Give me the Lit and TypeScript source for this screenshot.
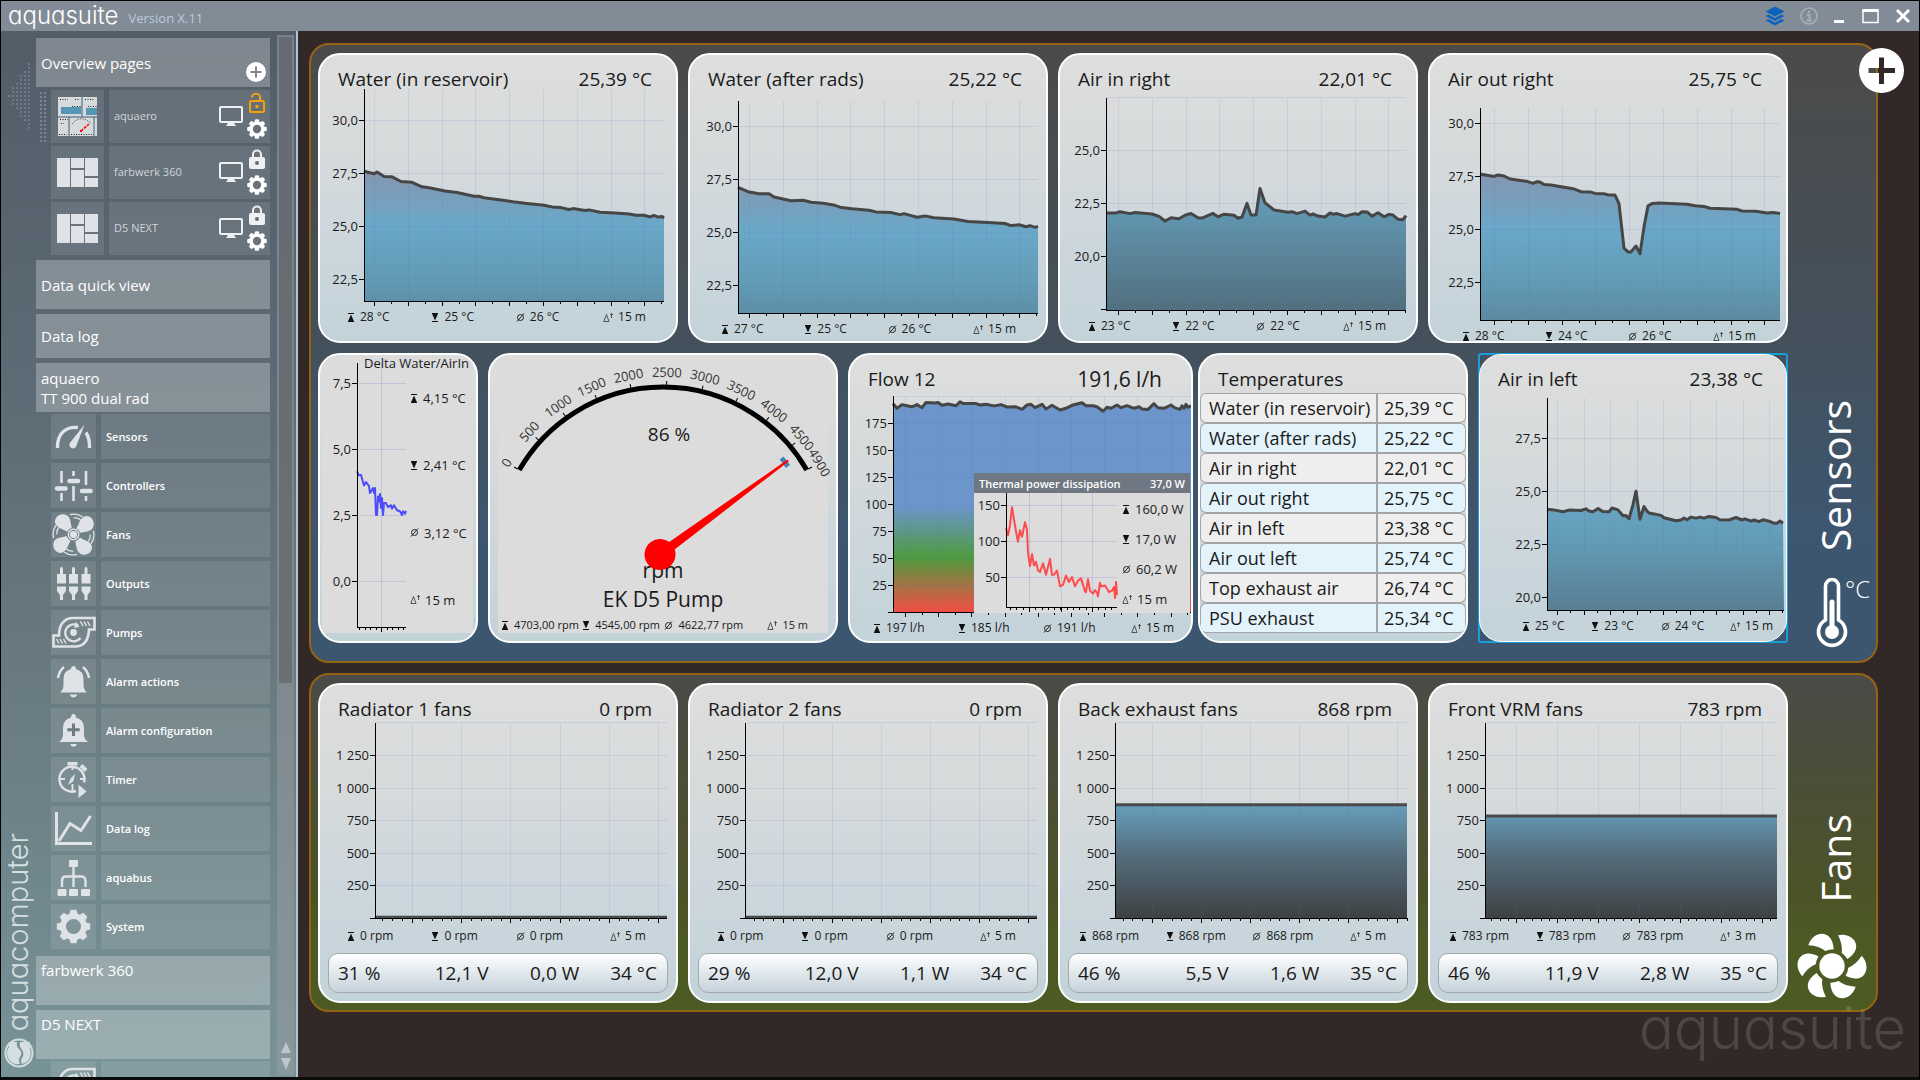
import { LitElement, html, svg, css, nothing, TemplateResult } from "lit";
import { customElement, property } from "lit/decorators.js";
import { classMap } from "lit/directives/class-map.js";
import { styleMap } from "lit/directives/style-map.js";

type Point = [number, number];

interface TrendConfig {
  width: number;
  left: number;
  plotW: number;
  plotH: number;
  tail?: number;
  refValue: number;
  refY: number;
  pxPerUnit: number;
  ticks: [string, number][];
  grid: { first: number; step: number; count: number; minor: number };
  stops?: [number, string][];
  line: string;
  lineWidth: number;
  points: Point[];
  clean?: boolean;
}

interface Stats {
  max: string;
  min: string;
  avg: string;
  span: string;
}

const WATER_STOPS: [number, string][] = [
  [30, "#9a8aa4"],
  [27.5, "#8497b2"],
  [25, "#6aa8c8"],
  [22.5, "#629ab5"],
  [20, "#5a8499"],
  [17.5, "#51707f"],
];
const FAN_STOPS: [number, string][] = [
  [870, "#669eb9"],
  [750, "#6191aa"],
  [500, "#566f7e"],
  [250, "#495860"],
  [0, "#3e4142"],
];
const FLOW_STOPS: [number, string][] = [
  [200, "#6b95cb"],
  [98, "#6b95cb"],
  [50, "#4f9a3e"],
  [5, "#e45546"],
  [0, "#f04e44"],
];

const tempChart = (
  left: number,
  refValue: number,
  refY: number,
  ticks: [string, number][],
  first: number,
  points: Point[],
): TrendConfig => ({
  width: 356,
  left,
  plotW: 300,
  plotH: 212,
  refValue,
  refY,
  pxPerUnit: 21.2,
  ticks,
  grid: { first, step: 33.8, count: 9, minor: 2 },
  stops: WATER_STOPS,
  line: "#464646",
  lineWidth: 3,
  points,
});

const fanChart = (rpm: number, step: number, first: number): TrendConfig => ({
  width: 356,
  left: 55,
  plotW: 292,
  plotH: 195,
  tail: 9,
  refValue: 0,
  refY: 195,
  pxPerUnit: 0.1304,
  ticks: [
    ["1 250", 1250],
    ["1 000", 1000],
    ["750", 750],
    ["500", 500],
    ["250", 250],
    ["", 0],
    ["-", 1500],
  ],
  grid: { first, step, count: Math.floor((292 - first) / step) + 1, minor: 5 },
  stops: FAN_STOPS,
  line: "#4a4a4a",
  lineWidth: 3,
  points: [
    [0, rpm],
    [292, rpm],
  ],
});

const T_HIGH: [string, number][] = [["30,0", 30], ["27,5", 27.5], ["25,0", 25], ["22,5", 22.5]];

const waterReservoir = tempChart(44, 30, 31, T_HIGH, 10, [
  [0, 27.58], [10, 27.46], [13, 27.55], [20, 27.33], [28, 27.32], [37, 27.1], [48, 27.06], [58, 26.85], [65, 26.8],
  [81, 26.65], [93, 26.58], [110, 26.4], [115, 26.4], [120, 26.33], [137, 26.23], [149, 26.14], [163, 26.06],
  [180, 25.98], [188, 25.9], [197, 25.87], [205, 25.78], [209, 25.82], [221, 25.73], [225, 25.76], [236, 25.65],
  [251, 25.62], [265, 25.56], [272, 25.51], [280, 25.51], [286, 25.43], [290, 25.5], [294, 25.42], [298, 25.45],
  [300, 25.37],
]);
const waterRads = tempChart(48, 30, 25, T_HIGH, 11, [
  [0, 27.11], [10, 26.9], [21, 26.8], [31, 26.8], [36, 26.65], [53, 26.47], [65, 26.5], [73, 26.4], [85, 26.36],
  [97, 26.26], [102, 26.17], [114, 26.1], [131, 26.03], [138, 25.95], [153, 25.92], [162, 25.82], [166, 25.87],
  [179, 25.7], [187, 25.76], [196, 25.67], [216, 25.62], [230, 25.5], [250, 25.45], [267, 25.4], [273, 25.3],
  [281, 25.34], [288, 25.25], [292, 25.3], [297, 25.22], [300, 25.27],
]);
const airInRight = tempChart(46, 25, 52, [["25,0", 25], ["22,5", 22.5], ["20,0", 20], ["", 17.5], ["-", 27.5]], 12, [
  [0, 22.03], [10, 22.03], [14, 22.09], [24, 22], [29, 22.05], [46, 21.98], [53, 21.87], [59, 21.65], [65, 21.8],
  [73, 21.76], [79, 21.92], [85, 22.01], [92, 21.8], [96, 21.79], [107, 22.01], [112, 21.85], [118, 21.97],
  [128, 21.92], [132, 21.78], [136, 21.84], [141, 22.48], [145, 21.93], [150, 21.93], [154, 23.19], [159, 22.5],
  [161, 22.44], [168, 22.17], [182, 22.06], [186, 22.09], [191, 22], [199, 22.12], [204, 21.93], [207, 21.98],
  [212, 21.88], [219, 21.84], [224, 22.03], [227, 21.97], [231, 22], [239, 21.88], [249, 22], [252, 21.95],
  [256, 22.09], [261, 22.08], [266, 21.88], [272, 22.04], [278, 21.85], [283, 21.96], [287, 21.93], [292, 21.73],
  [297, 21.71], [300, 21.9],
]);
const airOutRight = tempChart(50, 30, 15, T_HIGH, 14, [
  [0, 27.6], [14, 27.48], [18, 27.55], [24, 27.5], [30, 27.36], [47, 27.25], [53, 27.15], [57, 27.23], [60, 27.22],
  [64, 27.1], [71, 27.08], [93, 26.9], [101, 26.76], [110, 26.75], [115, 26.68], [124, 26.66], [129, 26.6],
  [135, 26.6], [139, 26.2], [141, 25.35], [144, 24.1], [148, 23.92], [151, 23.92], [156, 24.2], [160, 23.83],
  [164, 25.1], [168, 26.09], [172, 26.2], [179, 26.23], [201, 26.18], [207, 26.17], [215, 26.1], [224, 26.06],
  [230, 25.98], [257, 25.93], [262, 25.85], [276, 25.84], [287, 25.76], [293, 25.78], [300, 25.73],
]);
const airInLeft: TrendConfig = {
  width: 306,
  left: 67,
  plotW: 237,
  plotH: 212,
  refValue: 27.5,
  refY: 40,
  pxPerUnit: 21.2,
  ticks: [["27,5", 27.5], ["25,0", 25], ["22,5", 22.5], ["20,0", 20]],
  grid: { first: 10, step: 26.5, count: 9, minor: 2 },
  stops: WATER_STOPS,
  line: "#464646",
  lineWidth: 3,
  points: [
    [0, 24.14], [7, 24.11], [16, 24.02], [22, 24.1], [34, 24.08], [39, 24.16], [42, 24.05], [46, 24.02], [51, 24.17],
    [56, 24.03], [62, 24.02], [65, 24.2], [71, 24.11], [76, 23.83], [79, 23.85], [82, 23.69], [86, 24.36],
    [89, 24.99], [93, 23.67], [97, 24.27], [100, 24.05], [102, 23.96], [107, 23.92], [114, 23.85], [117, 23.74],
    [129, 23.6], [134, 23.63], [137, 23.72], [140, 23.64], [144, 23.77], [149, 23.72], [153, 23.77], [157, 23.72],
    [162, 23.8], [169, 23.75], [173, 23.64], [182, 23.63], [189, 23.75], [195, 23.63], [198, 23.69], [204, 23.58],
    [207, 23.63], [212, 23.55], [216, 23.64], [222, 23.58], [227, 23.48], [230, 23.48], [233, 23.58], [236, 23.48],
  ],
};
const flow: TrendConfig = {
  width: 341,
  left: 43,
  plotW: 298,
  plotH: 216,
  refValue: 0,
  refY: 216,
  pxPerUnit: 1.08,
  ticks: [["175", 175], ["150", 150], ["125", 125], ["100", 100], ["75", 75], ["50", 50], ["25", 25], ["", 0], ["-", 200]],
  grid: { first: 12, step: 33.2, count: 9, minor: 2 },
  stops: FLOW_STOPS,
  line: "#464646",
  lineWidth: 3,
  points: [
    [0, 193], [4, 188.6], [9, 192], [14, 191], [19, 190], [24, 192], [29, 189.2], [33, 194], [42, 193.6], [45, 194],
    [49, 191.4], [55, 192.6], [63, 191], [67, 194.7], [70, 193], [83, 193], [87, 191.7], [93, 192.3], [101, 190.8],
    [108, 192], [114, 189.8], [123, 190], [129, 187.6], [134, 191.7], [138, 192.3], [142, 189.2], [149, 192.3],
    [153, 188], [159, 191.4], [167, 187], [173, 188.6], [179, 191.4], [189, 193.8], [193, 191], [200, 191],
    [204, 190], [210, 185.8], [214, 189.5], [218, 188.6], [224, 191.7], [228, 189.2], [234, 191], [241, 188.6],
    [246, 190], [249, 188], [255, 187.6], [261, 192.9], [265, 189.2], [271, 188.6], [278, 191.7], [282, 189],
    [287, 187.6], [289, 191], [291, 188.6], [293, 192.3], [295, 189.5], [298, 191],
  ],
};
const thermal: TrendConfig = {
  width: 145,
  left: 32,
  plotW: 111,
  plotH: 114,
  tail: 6,
  refValue: 150,
  refY: 12,
  pxPerUnit: 0.72,
  ticks: [["150", 150], ["100", 100], ["50", 50]],
  grid: { first: 23, step: 31.5, count: 3, minor: 5 },
  line: "#ff4b4b",
  lineWidth: 2,
  clean: true,
  points: [
    [0, 118], [2, 108], [4, 122], [6, 147], [8, 130], [10, 113], [12, 99], [14, 115], [16, 106], [19, 126], [21, 116],
    [22, 83], [24, 65], [26, 82], [28, 66], [30, 71], [32, 59], [34, 57], [37, 69], [40, 53], [44, 75], [46, 53],
    [48, 53], [51, 59], [54, 37], [57, 39], [60, 52], [63, 43], [66, 50], [69, 37], [72, 45], [75, 48], [79, 30],
    [80, 29], [82, 47], [84, 31], [87, 27], [89, 32], [91, 28], [92, 23], [94, 42], [95, 37], [99, 38], [103, 29],
    [106, 31], [108, 36], [109, 21], [110, 43], [111, 25],
  ],
};
const delta: TrendConfig = {
  width: 86,
  left: 35,
  plotW: 49,
  plotH: 264,
  tail: 6,
  refValue: 7.5,
  refY: 20,
  pxPerUnit: 26.4,
  ticks: [["7,5", 7.5], ["5,0", 5], ["2,5", 2.5], ["0,0", 0]],
  grid: { first: 24, step: 27.5, count: 1, minor: 5 },
  line: "#4b4bff",
  lineWidth: 2,
  clean: true,
  points: [
    [0, 4.15], [2, 4], [4, 4.02], [6, 3.75], [7, 3.62], [9, 3.75], [12, 3.59], [13, 3.33], [16, 3.52], [17, 3.33],
    [18, 3.52], [19, 2.5], [20, 2.5], [21, 3.2], [22, 3.02], [23, 3.3], [24, 2.77], [25, 3.14], [26, 2.5],
    [27, 2.95], [29, 2.95], [31, 2.8], [34, 2.87], [35, 2.74], [37, 2.87], [40, 2.68], [43, 2.64], [45, 2.5],
    [46, 2.64], [48, 2.55], [49, 2.66],
  ],
};

/** Time series plot with axes, grid and an optional gradient area. */
@customElement("trend-chart")
export class TrendChart extends LitElement {
  @property({ attribute: false }) config!: TrendConfig;
  @property() label = "";

  static styles = css`
    :host { display: block; }
    svg { display: block; width: 100%; height: auto; overflow: visible; }
    text { font-family: "Open Sans", "Noto Sans", sans-serif; font-size: 13px; fill: #1a1a1a; text-anchor: end; }
  `;

  render() {
    const c = this.config;
    const y = (v: number) => c.refY + (c.refValue - v) * c.pxPerUnit;
    const coords = c.points.map(([px, v]) => `${px},${y(v).toFixed(1)}`).join(" ");
    const grid: number[] = [];
    for (let i = 0; i < c.grid.count; i++) grid.push(Math.round(c.grid.first + i * c.grid.step) + 0.5);
    const small: number[] = [];
    const pitch = c.grid.step / c.grid.minor;
    for (let p = c.grid.first % pitch; p <= c.plotW; p += pitch) small.push(Math.round(p) + 0.5);
    return html`<svg viewBox="0 0 ${c.width} ${c.plotH + (c.tail ?? 7)}" role="img" aria-label=${this.label}>
      ${c.stops
        ? svg`<defs><linearGradient id="area" gradientUnits="userSpaceOnUse" x1="0" x2="0"
            y1=${y(c.stops[0][0])} y2=${y(c.stops[c.stops.length - 1][0])}>
            ${c.stops.map(([v, color]) => {
              const a = c.stops![0][0];
              const b = c.stops![c.stops!.length - 1][0];
              return svg`<stop offset=${(a - v) / (a - b)} stop-color=${color}></stop>`;
            })}
          </linearGradient></defs>`
        : nothing}
      <g transform="translate(${c.left} 0)">
        ${c.stops
          ? svg`<polygon points="0,${c.plotH} ${coords} ${c.plotW},${c.plotH}" fill="url(#area)"></polygon>`
          : nothing}
        ${grid.map((x) => svg`<line x1=${x} x2=${x} y1="0" y2=${c.plotH} stroke="#6464c8" stroke-opacity=${c.clean ? 0.2 : 0.12}></line>`)}
        ${c.ticks.map(([t, v]) => {
          const ty = Math.round(y(v)) + 0.5;
          return svg`<line x1="0" x2=${c.plotW} y1=${ty} y2=${ty} stroke="#6464c8" stroke-opacity=${c.clean ? 0.2 : 0.14}></line>
            ${t === "-" ? nothing : svg`<line x1="-5" x2="0" y1=${ty} y2=${ty} stroke="#000"></line>
            <text x="-6" y=${ty + 4}>${t}</text>`}`;
        })}
        <polyline points=${coords} fill="none" stroke=${c.line} stroke-width=${c.lineWidth} stroke-linejoin="round"></polyline>
        ${svg`<path d="M0.5,0V${c.plotH + 1}M0,${c.plotH + 0.5}H${c.plotW}" stroke="#000" fill="none"></path>
        ${small.map((x) => svg`<line x1=${x} x2=${x} y1=${c.plotH} y2=${c.plotH + 3} stroke="#000"></line>`)}
        ${grid.map((x) => svg`<line x1=${x} x2=${x} y1=${c.plotH} y2=${c.plotH + 5} stroke="#000"></line>`)}`}
      </g>
    </svg>`;
  }
}

/** Maximum, minimum, average and time span of a series. */
@customElement("stat-list")
export class StatList extends LitElement {
  @property({ attribute: false }) stats!: Stats;

  static styles = css`
    :host {
      display: grid;
      grid-template-columns: repeat(3, 85fr) 46fr;
      font: 12px/18px "Open Sans", "Noto Sans", sans-serif;
      color: #1a1a1a;
      white-space: nowrap;
    }
    :host([column]) { display: flex; flex-direction: column; justify-content: space-between; font-size: 13px; }
    :host([tight]) { grid-template-columns: 82fr 83fr 104fr 38fr; font-size: 11px; }
    .stat { display: flex; align-items: center; gap: 5px; }
    .stat:last-child { justify-content: flex-end; }
    :host([column]) .stat:last-child { justify-content: flex-start; }
    svg { flex: none; }
  `;

  render() {
    const s = this.stats;
    return html`
      <span class="stat"><svg width="8" height="9" viewBox="0 0 8 9" aria-label="max"><path d="M1 .5H7M1 8.5H7" stroke="#111"/><path d="M4 1.500L7 8.500H1Z" fill="#111"/></svg>${s.max}</span>
      <span class="stat"><svg width="8" height="9" viewBox="0 0 8 9" aria-label="min"><path d="M1 .5H7M1 8.5H7" stroke="#111"/><path d="M4 7.500L7 .5H1Z" fill="#111"/></svg>${s.min}</span>
      <span class="stat"><svg width="9" height="9" viewBox="0 0 9 9" aria-label="average"><ellipse cx="4.500" cy="4.500" rx="3" ry="3" fill="none" stroke="#222"/><path d="M1 8.500L8 .5" stroke="#222"/></svg>${s.avg}</span>
      <span class="stat"><svg width="10" height="9" viewBox="0 0 10 9" aria-label="time span"><path d="M3.500 1.500L6 8.500H.8Z" fill="none" stroke="#444" stroke-width=".9"/><path d="M8.500 0V5M7.200 1.500H10" stroke="#444" stroke-width=".9"/></svg>${s.span}</span>
    `;
  }
}

/** Round speed gauge with needle. */
@customElement("pump-gauge")
export class PumpGauge extends LitElement {
  @property({ type: Number }) value = 4622;

  static styles = css`
    :host { display: block; }
    svg { display: block; width: 100%; height: auto; overflow: visible; }
    text { font-family: "Open Sans", "Noto Sans", sans-serif; fill: #1a1a1a; text-anchor: middle; }
    .scale { font-size: 13px; fill: #333; }
    .big { font-size: 19px; }
    .name { font-size: 21px; }
  `;

  render() {
    const cx = 165;
    const cy = 198;
    const max = 4900;
    const angle = (v: number) => -60 + (120 * v) / max;
    const at = (deg: number, r: number) => {
      const a = (deg * Math.PI) / 180;
      return [cx + r * Math.sin(a), cy - r * Math.cos(a)];
    };
    const [x0, y0] = at(-60, 166);
    const [x1, y1] = at(60, 166);
    const needle = (Math.atan2(128, 94) * 180) / Math.PI;
    const marks = [0, 500, 1000, 1500, 2000, 2500, 3000, 3500, 4000, 4500, 4900];
    return html`<svg viewBox="0 0 330 262" role="img" aria-label="EK D5 Pump ${this.value} rpm">
      <path d="M${x0} ${y0}A166 166 0 0 1 ${x1} ${y1}" fill="none" stroke="#000" stroke-width="5"></path>
      ${marks.map((m) => {
        const a = angle(m);
        const [lx, ly] = at(a, 180);
        return svg`<line x1=${cx} x2=${cx} y1=${cy - 168} y2=${cy - 172} stroke="#000" transform="rotate(${a} ${cx} ${cy})"></line>
          <text class="scale" x=${lx} y=${ly} dy="4" transform="rotate(${a} ${lx} ${ly})">${m}</text>`;
      })}
      <path d="M${at(51.3, 152).join(" ")}A152 152 0 0 1 ${at(55.3, 152).join(" ")}" fill="none" stroke="#4682b4" stroke-width="5"></path>
      <text class="big" x="171" y="86">86 %</text>
      <text class="name" x="165" y="223">rpm</text>
      <text class="name" x="165" y="252">EK D5 Pump</text>
      <g transform="translate(162 199.500) rotate(${needle})">
        <polygon points="-5,0 5,0 1,-159 -1,-159" fill="#f00"></polygon>
        <circle r="15.500" fill="#f00"></circle>
      </g>
    </svg>`;
  }
}

const GEAR = (size: number, color: string) => html`<svg width=${size} height=${size} viewBox="-12 -12 24 24">
  <g fill=${color}>${[0, 45, 90, 135, 180, 225, 270, 315].map((a) => svg`<path d="M-2.300 -11.300Q0 -12.300 2.300 -11.300L3.600 -6H-3.600Z" transform="rotate(${a})"></path>`)}</g>
  <circle r="6.800" fill="none" stroke=${color} stroke-width="3.600"></circle></svg>`;

const ICONS: Record<string, TemplateResult> = {
  sensors: html`<svg viewBox="0 0 45 45"><g fill="none" stroke="#dfe3e8" stroke-width="3.400"><path d="M6.500 34C6 20 14 12.500 27 13.500"/><path d="M35 18.500Q39 25 38.500 34"/></g><path d="M33.500 10.500L25.500 31.500A3.600 3.600 0 1 1 19.200 28.500Z" fill="#dfe3e8"/></svg>`,
  controllers: html`<svg viewBox="0 0 45 45"><g stroke="#dfe3e8" stroke-width="2.600"><path d="M10.500 8V20M10.500 30V38M22.500 8V13M22.500 23V38M35 8V22M35 33V38"/><path d="M6 25.500H14.500M18.500 18H27M31 28H39.500" stroke-width="4.600" stroke-linecap="round"/></g></svg>`,
  fans: html`<svg viewBox="0 0 45 45"><g transform="translate(22.500 22.500) rotate(4)"><g fill="#dfe3e8">${[0, 90, 180, 270].map((a) => svg`<path d="M-2 -6C-4 -12 -4 -19 -11 -19.500C-18 -19.500 -21 -13 -18.500 -9C-15.500 -4.500 -10 -5 -6 -2Z" transform="rotate(${a})"></path><path d="M-5 -19.500Q2 -22 8 -18M-1 -16.500Q3 -17.500 6 -15" fill="none" stroke="#dfe3e8" stroke-width="1.300" transform="rotate(${a})"></path>`)}</g><circle r="6.800" fill="#6a7880"/><circle r="5.200" fill="none" stroke="#dfe3e8" stroke-width="1.500"/><circle r="3.600" fill="#dfe3e8"/></g></svg>`,
  outputs: html`<svg viewBox="0 0 45 45"><g fill="#dfe3e8">${[10.5, 22.5, 35].map((x) => svg`<path d="M${x - 1.5} 7.500Q${x} 4 ${x + 1.5} 7.500V13H${x + 4.500}V22.500H${x - 4.500}V13H${x - 1.5}ZM${x - 4.500} 25.500H${x + 4.500}V30L${x + 1.500} 34V39H${x - 1.500}V34L${x - 4.500} 30Z"></path>`)}</g></svg>`,
  pumps: html`<svg viewBox="0 0 45 45"><g fill="none" stroke="#dfe3e8" stroke-width="2.600"><path d="M43.500 8H22C13 8 8 15 8 25.500H2.500V36.500H24C33 36.500 37.500 31 38 19.500H43.500Z"/><path d="M27 15.500A8.500 8.500 0 1 0 29.500 28" stroke-width="2.400"/></g><path d="M25 11.500L28.500 17L23 18Z" fill="#dfe3e8"/><circle cx="22.500" cy="22.500" r="3.400" fill="#dfe3e8"/><path d="M29.500 11.500L32 16M33 11.500L35.500 16M36.500 11.500L39 16M5.500 29L8 33.500M9 29L11.500 33.500M12.500 29L15 33.500" stroke="#dfe3e8" stroke-width="1.500"/></svg>`,
  alarm: html`<svg viewBox="0 0 45 45"><path d="M9 33.500Q12.500 31 12.500 26V20Q12.500 12 20 10Q20 7 22.500 7T25 10Q32.500 12 32.500 20V26Q32.500 31 36 33.500ZM18.500 35.500H26.500Q25 38.500 22.500 38.500T18.500 35.500Z" fill="#dfe3e8"/><path d="M7 19Q8 12 13 8M38 19Q37 12 32 8" fill="none" stroke="#dfe3e8" stroke-width="2.400"/></svg>`,
  alarmcfg: html`<svg viewBox="0 0 45 45"><path d="M8 34Q12 31.500 12 26V20Q12 11.500 20 9.500Q20 6 22.500 6T25 9.500Q33 11.500 33 20V26Q33 31.500 37 34ZM19 36H26Q25 38.800 22.500 38.800T19 36Z" fill="#dfe3e8"/><path d="M22.500 15.500V28M16.300 21.800H28.700" stroke="#6d7b83" stroke-width="3"/></svg>`,
  timer: html`<svg viewBox="0 0 45 45"><g fill="none" stroke="#dfe3e8"><path d="M25 34A12.500 12.500 0 1 1 33 25.500" stroke-width="2.400"/><path d="M21.500 9V13M21.500 27V34M9 22H14M29 22H34" stroke-width="2"/><path d="M30 8.500L35 13.500" stroke-width="4"/></g><path d="M16.500 5H26.500V8.500H16.500ZM24 17L22.500 24L17 28L20 21ZM27.500 27.500L35.500 34.500L27.500 41Z" fill="#dfe3e8"/></svg>`,
  datalog: html`<svg viewBox="0 0 45 45"><g fill="none" stroke="#dfe3e8" stroke-width="3"><path d="M5.500 6V37.500H41"/><path d="M8 35L19 17.500L30 24.500L39.500 10"/></g></svg>`,
  aquabus: html`<svg viewBox="0 0 45 45"><g fill="#dfe3e8"><rect x="18" y="5" width="9" height="7" rx="1"/><rect x="6.500" y="34" width="9" height="7" rx="1"/><rect x="18" y="34" width="9" height="7" rx="1"/><rect x="30" y="34" width="9" height="7" rx="1"/></g><path d="M22.500 12V32M11 32V26Q11 21.500 15 21.500H30Q34.500 21.500 34.500 26V32" fill="none" stroke="#dfe3e8" stroke-width="2.400"/></svg>`,
  system: html`<svg viewBox="-15.500 -15.500 31 31"><g fill="#dfe3e8">${[0, 45, 90, 135, 180, 225, 270, 315].map((a) => svg`<path d="M-2 -11.500L2 -11.500L3.500 -6H-3.500Z" transform="rotate(${a})"></path>`)}</g><circle r="7.200" fill="none" stroke="#dfe3e8" stroke-width="4"></circle></svg>`,
  tiles: html`<svg viewBox="0 0 53 53"><g fill="#dfe3e8"><rect x="6" y="12" width="13" height="29"/><rect x="20" y="12" width="13" height="10"/><rect x="20" y="24" width="13" height="17"/><rect x="34" y="12" width="13" height="18"/><rect x="34" y="32" width="13" height="9"/></g></svg>`,
  preview: html`<svg viewBox="0 0 53 53"><rect x="7" y="7" width="39" height="39" fill="#d7dadb"/><path d="M31 7V27M18 27V46M43 27V46M7 27H46" stroke="#3d5f78"/><rect x="10" y="17" width="20" height="7" fill="#5596b4"/><rect x="35" y="18" width="11" height="7" fill="#5596b4"/><g stroke="#222" stroke-dasharray="1 1.500"><path d="M9 9.500H17M24 9.500H29M34 9.500H43M21 16.500H30M37 16.500H46M9 29.500H17M8 44.500H16M20 44.500H42M10 33.500H13"/><path d="M21 34Q29 24 40 33" fill="none"/></g><path d="M30 41L38 34" stroke="#f00" stroke-width="1.500" stroke-dasharray="3 1"/><rect x="29" y="40" width="2" height="2" fill="#f00"/></svg>`,
};

const monitor = html`<svg width="24" height="20" viewBox="0 0 24 20"><rect x="1" y="1" width="22" height="15" rx="1" fill="none" stroke="#eef0f2" stroke-width="2"/><path d="M9 17H15L17 20H7Z" fill="#eef0f2"/></svg>`;
const lock = html`<svg width="16" height="20" viewBox="0 0 16 20"><path d="M4 9V5.500A4 4 0 0 1 12 5.500V9" fill="none" stroke="#eef0f2" stroke-width="2"/><rect y="8" width="16" height="12" rx="2" fill="#eef0f2"/><circle cx="8" cy="14" r="2" fill="#636d77"/></svg>`;
const unlock = html`<svg width="16" height="20" viewBox="0 0 16 20"><path d="M3 4.500A4 4 0 0 1 11 4.500V8" fill="none" stroke="#f5a10c" stroke-width="2"/><rect x="1" y="8" width="14" height="11" rx="1.500" fill="none" stroke="#f5a10c" stroke-width="2"/><circle cx="8" cy="13.500" r="1.800" fill="#f5a10c"/></svg>`;

const DEVICE_ROWS: [string, string][] = [
  ["sensors", "Sensors"],
  ["controllers", "Controllers"],
  ["fans", "Fans"],
  ["outputs", "Outputs"],
  ["pumps", "Pumps"],
  ["alarm", "Alarm actions"],
  ["alarmcfg", "Alarm configuration"],
  ["timer", "Timer"],
  ["datalog", "Data log"],
  ["aquabus", "aquabus"],
  ["system", "System"],
];
const PAGES: [string, string, boolean][] = [
  ["preview", "aquaero", true],
  ["tiles", "farbwerk 360", false],
  ["tiles", "D5 NEXT", false],
];

interface TrendCard {
  title: string;
  value: string;
  config: TrendConfig;
  gap: number;
  indent: number;
  stats: Stats;
  readings?: string[];
}

const rpmStats = (v: number, span: string): Stats => ({ max: `${v} rpm`, min: `${v} rpm`, avg: `${v} rpm`, span });

const SENSOR_CARDS: TrendCard[] = [
  { title: "Water (in reservoir)", value: "25,39 °C", config: waterReservoir, gap: 0, indent: 27, stats: { max: "28 °C", min: "25 °C", avg: "26 °C", span: "15 m" } },
  { title: "Water (after rads)", value: "25,22 °C", config: waterRads, gap: 12, indent: 31, stats: { max: "27 °C", min: "25 °C", avg: "26 °C", span: "15 m" } },
  { title: "Air in right", value: "22,01 °C", config: airInRight, gap: 9, indent: 28, stats: { max: "23 °C", min: "22 °C", avg: "22 °C", span: "15 m" } },
  { title: "Air out right", value: "25,75 °C", config: airOutRight, gap: 19, indent: 32, stats: { max: "28 °C", min: "24 °C", avg: "26 °C", span: "15 m" } },
];
const FAN_CARDS: TrendCard[] = [
  { title: "Radiator 1 fans", value: "0 rpm", config: fanChart(6, 49.2, 37), gap: 4, indent: 27, stats: rpmStats(0, "5 m"), readings: ["31 %", "12,1 V", "0,0 W", "34 °C"] },
  { title: "Radiator 2 fans", value: "0 rpm", config: fanChart(6, 49, 38), gap: 4, indent: 27, stats: rpmStats(0, "5 m"), readings: ["29 %", "12,0 V", "1,1 W", "34 °C"] },
  { title: "Back exhaust fans", value: "868 rpm", config: fanChart(868, 49, 37), gap: 4, indent: 19, stats: rpmStats(868, "5 m"), readings: ["46 %", "5,5 V", "1,6 W", "35 °C"] },
  { title: "Front VRM fans", value: "783 rpm", config: fanChart(783, 41, 31), gap: 4, indent: 19, stats: rpmStats(783, "3 m"), readings: ["46 %", "11,9 V", "2,8 W", "35 °C"] },
];
const TEMPERATURES: [string, string][] = [
  ["Water (in reservoir)", "25,39 °C"],
  ["Water (after rads)", "25,22 °C"],
  ["Air in right", "22,01 °C"],
  ["Air out right", "25,75 °C"],
  ["Air in left", "23,38 °C"],
  ["Air out left", "25,74 °C"],
  ["Top exhaust air", "26,74 °C"],
  ["PSU exhaust", "25,34 °C"],
];

@customElement("app-root")
export class AppRoot extends LitElement {
  static styles = css`
    :host { display: block; font-family: "Open Sans", "Noto Sans", sans-serif; color: #1a1a1a; }
    * { box-sizing: border-box; }
    button { font: inherit; color: inherit; background: none; border: 0; padding: 0; margin: 0; text-align: left; display: block; }
    svg { display: block; }

    .window { display: flex; flex-direction: column; height: 100vh; border: 1px solid #000; border-bottom: 3px solid #0c0c0c; overflow: hidden; background: #322827; }
    .titlebar { flex: none; height: 30px; display: flex; align-items: center; gap: 10px; padding: 0 8px 0 7px; background: #828c96; }
    .brand { font: 300 24px/30px Inter, "Open Sans", sans-serif; font-feature-settings: "cv11"; color: #fff; }
    .version { font-size: 13px; line-height: 30px; color: #b9cbdc; padding-top: 4px; flex: 1; }
    .tools { display: flex; align-items: center; gap: 15px; }

    .body { flex: 1; display: flex; min-height: 0; }

    .sidebar { flex: none; width: 297px; display: flex; overflow: hidden; border-right: 2px solid #b4c3d0; background: linear-gradient(#525d68, #5b6a74 32%, #67797f 60%, #789398); }
    .rail { width: 35px; display: flex; flex-direction: column; justify-content: space-between; align-items: center; padding: 29px 0 9px; }
    .company { display: flex; flex-direction: column; align-items: center; gap: 7px; }
    .company-name { writing-mode: vertical-rl; transform: rotate(180deg); margin-right: 1px; font: 300 29px/34px Inter, "Open Sans", sans-serif; font-feature-settings: "cv11"; color: #d3dfe0; }
    .nav { width: 234px; padding-top: 7px; display: flex; flex-direction: column; gap: 5px; color: #fff; }
    .head { flex: none; width: 100%; height: 49px; padding: 0 5px; font-size: 15px; line-height: 20px; background: rgba(255, 255, 255, 0.26); }
    .head.low { height: 44px; }
    .head.top { padding-bottom: 22px; }
    .head-row { display: flex; align-items: center; height: 49px; padding: 0 4px 0 5px; background: rgba(255, 255, 255, 0.26); font-size: 15px; line-height: 20px; }
    .head-row .add { margin: 19px 0 0 auto; }
    .sub { display: flex; flex-direction: column; padding-left: 15px; }
    .pages { gap: 3px; padding-top: 3px; }
    .device { gap: 4px; padding-top: 2px; padding-bottom: 2px; }
    .row { display: flex; gap: 5px; font-size: 11px; }
    .pages .row { height: 53px; color: #d0d5d9; }
    .thumb, .label { background: rgba(255, 255, 255, 0.1); }
    .device .thumb { width: 45px; height: 45px; }
    .pages .thumb { width: 53px; height: 53px; }
    .device .row { font-weight: 600; }
    .row .label { flex: 1; padding: 0 5px; line-height: 45px; }
    .pages .label { display: flex; align-items: center; padding: 0 3px 2px 5px; line-height: 20px; }
    .label .name { flex: 1; }
    .pair { display: flex; flex-direction: column; align-items: center; gap: 6px; margin-left: 4px; }
    .drag { position: relative; }
    .drag::before { content: ""; position: absolute; left: -11px; top: 2px; bottom: 0; width: 7px; background: radial-gradient(circle at 1px 1px, #7a858f 1px, transparent 1px) 0 0 / 4px 4px; }
    .scroll { width: 17px; margin: 4px 2px 2px 7px; padding: 2px; display: flex; flex-direction: column; background: linear-gradient(#7a7f89, #808890 60%, #88989c); }
    .thumb-bar { flex: 645; background: linear-gradient(#656a74, #6b7072); }
    .track { flex: 358; }
    .arrows { padding: 0 1px 3px; display: flex; flex-direction: column; align-items: center; }

    .main { flex: 1; position: relative; min-width: 0; display: flex; flex-direction: column; gap: 10px; padding: 12px 41px 0 11px; }
    .panel { border: 2px solid #936513; border-radius: 20px; display: grid; grid-template-columns: 1fr 88px; padding-left: 7px; }
    .sensors { padding-top: 8px; padding-bottom: 18px; background: linear-gradient(#4b4a49, #43515d 50%, #3d5670 80%); }
    .fans { padding-top: 8px; padding-bottom: 7px; background: linear-gradient(#4b4a48, #4c5327 65%, #4c5b24 80%); }
    .rows { display: flex; flex-direction: column; gap: 10px; }
    .four { display: grid; grid-template-columns: repeat(4, 1fr); gap: 10px; grid-auto-rows: 290px; }
    .fans .four { grid-auto-rows: 320px; }
    .mixed { display: grid; grid-template-columns: 160fr 350fr 620fr 310fr; grid-auto-rows: 290px; gap: 10px; }
    .couple { display: grid; grid-template-columns: 345fr 270fr; grid-auto-rows: 290px; gap: 5px; min-width: 0; }

    .card { position: relative; min-width: 0; display: flex; flex-direction: column; overflow: hidden; border: 2px solid #fff; border-radius: 22px; background: linear-gradient(#dedede, #d6dadb 35%, #cdd7dd 62%, #c3d3da); }
    .card-head { flex: none; height: 34px; padding: 10px 24px 0 18px; display: flex; justify-content: space-between; font-size: 19px; line-height: 28px; white-space: nowrap; }
    .flow .card-head { padding-right: 29px; }
    .flow .reading { font-size: 21px; }
    .chart { margin-top: var(--gap, 0); }
    .stats { padding: 0 30px 0 var(--indent, 27px); }
    .flow .stats { padding: 0 17px 0 23px; }
    .flow .chart { margin-top: 7px; }
    .left .stats { padding: 0 13px 0 42px; }
    .left .chart { margin-top: 9px; }
    .left .card-head { padding-right: 23px; }
    .selected { display: grid; min-width: 0; border: 2px solid #199edb; border-radius: 3px; }
    .selected .card { border-width: 1px; margin: -1px; }

    .readings { margin: auto 8px 8px; height: 40px; padding: 0 10px 0 9px; display: grid; grid-template-columns: 64fr 87fr 91fr 78fr; align-items: center; border: 1px solid #a4a9ab; border-radius: 10px; background: linear-gradient(#fff, #e6ecf0 40%, #c4d3da); font-size: 19px; text-align: right; white-space: nowrap; }
    .readings span:first-child { text-align: left; }

    .delta { background: linear-gradient(#dedede, #c3d3da); }
    .plain { background: #dcdcdc; flex: none; }
    .delta .plain { margin: 0 3px 8px 2px; height: 278px; display: grid; grid-template-columns: 86fr 65fr; grid-template-rows: 8px 1fr; }
    .delta-title { grid-column: 1 / 3; font-size: 13px; line-height: 16px; text-align: right; padding-right: 4px; white-space: nowrap; }
    .delta trend-chart { align-self: start; }
    .delta stat-list { padding: 26px 0 24px 2px; }
    .gauge .plain { margin: 0 8px; height: 278px; }
    .gauge stat-list { line-height: 16px; padding: 0 20px 0 3px; }

    .overlay { position: absolute; right: 1px; bottom: 28px; width: 216px; height: 140px; background: #dcdcdc; }
    .overlay-head { display: flex; justify-content: space-between; padding: 0 5px; height: 20px; background: #6f7882; color: #fff; font-size: 11px; font-weight: 600; line-height: 21px; }
    .overlay-body { display: grid; grid-template-columns: 145fr 71fr; }
    .overlay stat-list { height: 108px; padding-left: 3px; margin-top: 7px; }

    .temps table { border-collapse: separate; border-spacing: 0; width: 100%; margin-top: 4px; font-size: 18px; line-height: 26px; white-space: nowrap; table-layout: fixed; }
    .temps td, .temps th { font-weight: 400; text-align: left; padding: 1px 0 1px 8px; height: 30px; border: 1px solid #a2a4a6; }
    .temps th { width: 178px; border-radius: 6px 0 0 6px; border-right-width: 2px; }
    .temps td { padding-left: 6px; border-left: 0; border-radius: 0 6px 6px 0; }
    .temps tr:nth-child(odd) th, .temps tr:nth-child(odd) td { background: #eee; }
    .temps tr:nth-child(even) th, .temps tr:nth-child(even) td { background: #e2f3fb; }

    .side { display: flex; flex-direction: column; align-items: center; justify-content: flex-end; color: #fff; }
    .sensors .side { gap: 27px; margin-bottom: -5px; }
    .fans .side { gap: 30px; padding-bottom: 4px; }
    .side-name { writing-mode: vertical-rl; transform: rotate(180deg); margin-left: 6px; font-size: 41px; line-height: 46px; font-weight: 500; }
    .thermo { position: relative; }
    .unit { position: absolute; left: 29px; top: -3px; font-size: 24px; font-weight: 300; line-height: 28px; }

    .add-page { position: absolute; right: 15px; top: 17px; }
    .watermark { position: absolute; right: 13px; bottom: 17px; pointer-events: none; font: 300 58px/64px Inter, "Open Sans", sans-serif; font-feature-settings: "cv11"; color: rgba(255, 255, 255, 0.14); }
  `;

  private trendCard(c: TrendCard) {
    return html`<article class="card" style=${styleMap({ "--gap": `${c.gap}px`, "--indent": `${c.indent}px` })}>
      <header class="card-head"><span>${c.title}</span><span class="reading">${c.value}</span></header>
      <trend-chart class="chart" .config=${c.config} label=${c.title}></trend-chart>
      <stat-list class="stats" .stats=${c.stats}></stat-list>
      ${c.readings ? html`<div class="readings">${c.readings.map((r) => html`<span>${r}</span>`)}</div>` : nothing}
    </article>`;
  }

  private dotTriangle() {
    const dots: TemplateResult[] = [];
    for (let col = 0; col < 6; col++) {
      const reach = Math.round(col * 1.6);
      for (let r = -reach; r <= reach; r++) dots.push(svg`<rect x=${col * 4} y=${35 + r * 4} width="2" height="2"></rect>` as TemplateResult);
    }
    return html`<svg width="22" height="72" viewBox="0 0 22 72" fill="#6c7984" aria-hidden="true">${dots}</svg>`;
  }

  private sidebar() {
    return html`<aside class="sidebar">
      <div class="rail">
        ${this.dotTriangle()}
        <div class="company">
          <span class="company-name">aquacomputer</span>
          <svg width="30" height="30" viewBox="0 0 30 30" aria-hidden="true"><circle cx="15" cy="15" r="13.500" fill="none" stroke="#d3dfe0" stroke-width="2"/><path d="M5 4H13Q12 8 15 11Q19 15 16 19Q14 22 16 26A11 11 0 0 1 5 9Z" fill="#d3dfe0"/><path d="M16 4H26V11A11 11 0 0 1 18 26Q16 22 18.500 19Q21 15 17 10.500Q15 8 16 4Z" fill="#d3dfe0"/></svg>
        </div>
      </div>
      <nav class="nav" aria-label="Pages">
        <div>
          <div class="head-row"><span>Overview pages</span>
            <button class="add" aria-label="Add overview page"><svg width="20" height="20" viewBox="0 0 20 20"><circle cx="10" cy="10" r="10" fill="#fff"/><path d="M10 4.500V15.500M4.500 10H15.500" stroke="#7f8790" stroke-width="2"/></svg></button>
          </div>
          <div class="sub pages">
            ${PAGES.map(
              ([icon, name, open]) => html`<div class=${classMap({ row: true, drag: open })}>
                <button class="thumb" aria-label="Open ${name}">${ICONS[icon]}</button>
                <div class="label"><span class="name">${name}</span>
                  <button aria-label="Desktop view">${monitor}</button>
                  <span class="pair"><button aria-label=${open ? "Lock" : "Unlock"}>${open ? unlock : lock}</button><button aria-label="Settings">${GEAR(20, "#fff")}</button></span>
                </div>
              </div>`,
            )}
          </div>
        </div>
        <button class="head">Data quick view</button>
        <button class="head low">Data log</button>
        <div>
          <button class="head">aquaero<br />TT 900 dual rad</button>
          <div class="sub device">
            ${DEVICE_ROWS.map(([icon, name]) => html`<button class="row"><span class="thumb">${ICONS[icon]}</span><span class="label">${name}</span></button>`)}
          </div>
        </div>
        <button class="head top">farbwerk 360</button>
        <div>
          <button class="head top">D5 NEXT</button>
          <div class="sub device"><button class="row" aria-label="Pumps"><span class="thumb">${ICONS.pumps}</span><span class="label"></span></button></div>
        </div>
      </nav>
      <div class="scroll" aria-hidden="true">
        <div class="thumb-bar"></div><div class="track"></div>
        <div class="arrows"><svg width="10" height="28" viewBox="0 0 10 28"><path d="M5 0L10 11H0ZM0 16H10L5 28Z" fill="#bac6cb"/></svg></div>
      </div>
    </aside>`;
  }

  render() {
    return html`<div class="window">
      <header class="titlebar">
        <span class="brand">aquasuite</span><span class="version">Version X.11</span>
        <div class="tools">
          <button aria-label="Layers"><svg width="20" height="20" viewBox="0 0 20 20"><path d="M10 .5L19.500 5.500L10 10.500L.5 5.500ZM.5 10L3.500 8.500L10 12L16.500 8.500L19.500 10L10 15ZM.5 14.500L3.500 13L10 16.500L16.500 13L19.500 14.500L10 19.500Z" fill="#0d62bd"/></svg></button>
          <button aria-label="Information"><svg width="18" height="18" viewBox="0 0 18 18"><circle cx="9" cy="9" r="8" fill="none" stroke="#a7afb6" stroke-width="1.600"/><path d="M9 4V6M7 8H9.500V13M6.500 13.500H11.500" stroke="#a7afb6" stroke-width="2" fill="none"/></svg></button>
          <button aria-label="Minimize"><svg width="12" height="16" viewBox="0 0 12 16"><path d="M1 13.500H11" stroke="#fff" stroke-width="3"/></svg></button>
          <button aria-label="Maximize"><svg width="20" height="16" viewBox="0 0 20 16"><path d="M3 3V14.500H18V3" stroke="#fff" fill="none" stroke-width="1.500"/><path d="M2.300 2.500H18.700" stroke="#fff" stroke-width="3"/></svg></button>
          <button aria-label="Close"><svg width="16" height="16" viewBox="0 0 16 16"><path d="M2 2L14 14M14 2L2 14" stroke="#fff" stroke-width="3"/></svg></button>
        </div>
      </header>
      <div class="body">
        ${this.sidebar()}
        <main class="main">
          <section class="panel sensors" aria-label="Sensors">
            <div class="rows">
              <div class="four">${SENSOR_CARDS.map((c) => this.trendCard(c))}</div>
              <div class="mixed">
                <article class="card delta"><div class="plain">
                  <div class="delta-title">Delta Water/AirIn</div>
                  <trend-chart .config=${delta} label="Delta Water/AirIn"></trend-chart>
                  <stat-list column .stats=${{ max: "4,15 °C", min: "2,41 °C", avg: "3,12 °C", span: "15 m" }}></stat-list>
                </div></article>
                <article class="card gauge"><div class="plain">
                  <pump-gauge></pump-gauge>
                  <stat-list tight .stats=${{ max: "4703,00 rpm", min: "4545,00 rpm", avg: "4622,77 rpm", span: "15 m" }}></stat-list>
                </div></article>
                <div class="couple">
                  <article class="card flow">
                    <header class="card-head"><span>Flow 12</span><span class="reading">191,6 l/h</span></header>
                    <trend-chart class="chart" .config=${flow} label="Flow"></trend-chart>
                    <stat-list class="stats" .stats=${{ max: "197 l/h", min: "185 l/h", avg: "191 l/h", span: "15 m" }}></stat-list>
                    <div class="overlay">
                      <div class="overlay-head"><span>Thermal power dissipation</span><span>37,0 W</span></div>
                      <div class="overlay-body">
                        <trend-chart .config=${thermal} label="Thermal power dissipation"></trend-chart>
                        <stat-list column .stats=${{ max: "160,0 W", min: "17,0 W", avg: "60,2 W", span: "15 m" }}></stat-list>
                      </div>
                    </div>
                  </article>
                  <article class="card temps">
                    <header class="card-head"><span>Temperatures</span></header>
                    <table aria-label="Temperatures"><tbody>
                      ${TEMPERATURES.map(([n, v]) => html`<tr><th scope="row">${n}</th><td>${v}</td></tr>`)}
                    </tbody></table>
                  </article>
                </div>
                <div class="selected"><article class="card left">
                  <header class="card-head"><span>Air in left</span><span class="reading">23,38 °C</span></header>
                  <trend-chart class="chart" .config=${airInLeft} label="Air in left"></trend-chart>
                  <stat-list class="stats" .stats=${{ max: "25 °C", min: "23 °C", avg: "24 °C", span: "15 m" }}></stat-list>
                </article></div>
              </div>
            </div>
            <div class="side">
              <span class="side-name">Sensors</span>
              <div class="thermo">
                <svg width="32" height="70" viewBox="0 0 32 70" aria-hidden="true"><path d="M9.500 42V8A6.500 6.500 0 0 1 22.500 8V42A13.500 13.500 0 1 1 9.500 42Z" fill="none" stroke="#fff" stroke-width="3.600"/><circle cx="16" cy="54" r="7" fill="#fff"/><path d="M16 54V24" stroke="#fff" stroke-width="5" stroke-linecap="round"/></svg>
                <span class="unit">°C</span>
              </div>
            </div>
          </section>
          <section class="panel fans" aria-label="Fans">
            <div class="four">${FAN_CARDS.map((c) => this.trendCard(c))}</div>
            <div class="side">
              <span class="side-name">Fans</span>
              <svg width="70" height="66" viewBox="-105 -99 210 198" aria-hidden="true"><circle r="38" fill="#fff"/>${[0, 60, 120, 180, 240, 300].map((a) => svg`<path d="M-71 -62C-58 -106 2 -114 5 -50Q-8 -50 -20 -45Q-38 -60 -71 -62Z" fill="#fff" transform="rotate(${a})"></path>`)}</svg>
            </div>
          </section>
          <button class="add-page" aria-label="Add element"><svg width="45" height="45" viewBox="0 0 45 45"><path fill-rule="evenodd" d="M22.500 0A22.500 22.500 0 1 1 22.500 45A22.500 22.500 0 1 1 22.500 0ZM20 9.500V20H9.500V25H20V36H25V25H36V20H25V9.500Z" fill="#fff"/></svg></button>
          <span class="watermark" aria-hidden="true">aquasuite</span>
        </main>
      </div>
    </div>`;
  }
}
